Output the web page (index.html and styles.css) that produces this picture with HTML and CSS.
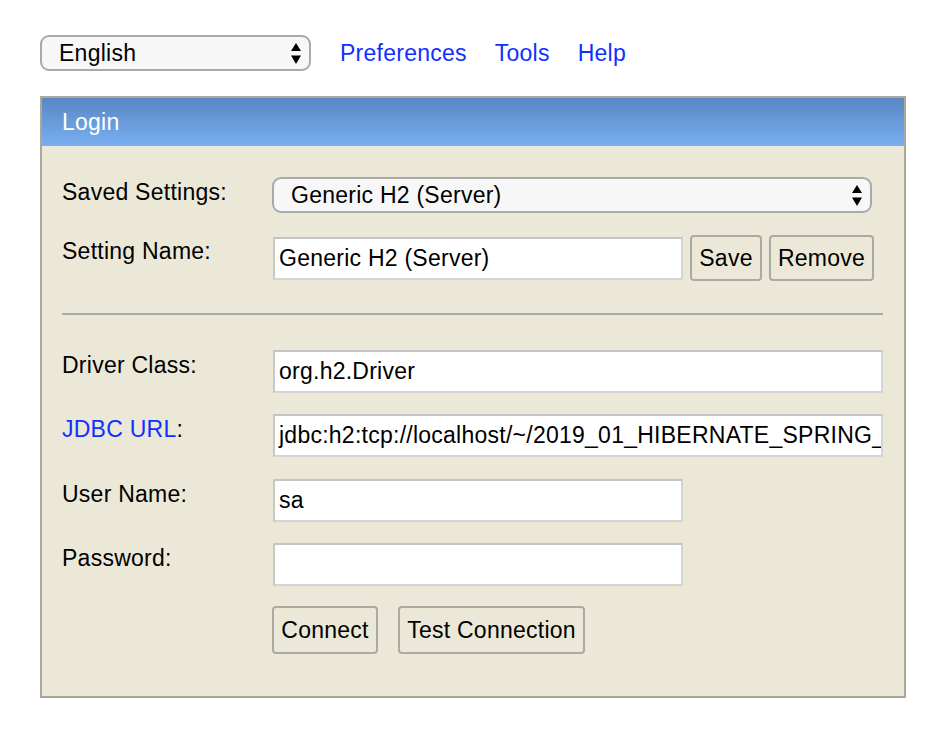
FILE: index.html
```html
<!DOCTYPE html>
<html lang="en">
<head>
<meta charset="utf-8">
<title>H2 Console</title>
<link rel="stylesheet" href="styles.css">
</head>
<body>
<div class="page">
  <div class="topbar">
    <div class="select select-lang">
      <span>English</span>
      <svg class="arrows" width="10" height="21" viewBox="0 0 10 21"><polygon points="0,8 5,0 10,8"/><polygon points="0,12.5 10,12.5 5,21"/></svg>
    </div>
    <nav class="links">
      <a href="#">Preferences</a>
      <a href="#">Tools</a>
      <a href="#">Help</a>
    </nav>
  </div>

  <div class="panel">
    <div class="panel-head">Login</div>
    <div class="panel-body">
      <div class="row row-saved">
        <div class="label">Saved Settings:</div>
        <div class="select select-saved">
          <span>Generic H2 (Server)</span>
          <svg class="arrows" width="10" height="21" viewBox="0 0 10 21"><polygon points="0,8 5,0 10,8"/><polygon points="0,12.5 10,12.5 5,21"/></svg>
        </div>
      </div>
      <div class="row row-name">
        <div class="label">Setting Name:</div>
        <div class="controls">
          <div class="input input-short">Generic H2 (Server)</div>
          <button class="btn btn-save">Save</button>
          <button class="btn btn-remove">Remove</button>
        </div>
      </div>
      <div class="divider"></div>
      <div class="row row-driver">
        <div class="label">Driver Class:</div>
        <div class="input input-long">org.h2.Driver</div>
      </div>
      <div class="row row-gap">
        <div class="label"><a href="#">JDBC URL</a>:</div>
        <div class="input input-long">jdbc:h2:tcp://localhost/~/2019_01_HIBERNATE_SPRING_BOOT</div>
      </div>
      <div class="row row-gap-wide">
        <div class="label">User Name:</div>
        <div class="input input-short">sa</div>
      </div>
      <div class="row row-gap">
        <div class="label">Password:</div>
        <div class="input input-short"></div>
      </div>
      <div class="row row-actions">
        <div class="label"></div>
        <div class="controls controls-actions">
          <button class="btn btn-big btn-connect">Connect</button>
          <button class="btn btn-big btn-test">Test Connection</button>
        </div>
      </div>
    </div>
  </div>
</div>
</body>
</html>
```

FILE: styles.css
```css
html, body {
  margin: 0;
  padding: 0;
  background: #ffffff;
}

body {
  font-family: "Liberation Sans", Arial, Helvetica, sans-serif;
  font-size: 23px;
  letter-spacing: 0.25px;
  color: #000000;
}

.page {
  padding: 35px 0 0 40px;
  width: 866px;
}

a {
  color: #1030ff;
  text-decoration: none;
}

.topbar {
  display: flex;
  align-items: center;
  height: 36px;
}

.links {
  display: flex;
  gap: 28px;
  margin-left: 29px;
  line-height: 26px;
}

.select {
  box-sizing: border-box;
  display: flex;
  align-items: center;
  justify-content: space-between;
  height: 36px;
  background: #f7f7f7;
  border: 2px solid #a9a9a9;
  border-radius: 9px;
  padding: 0 8px 0 17px;
  line-height: 26px;
}

.select-lang {
  width: 271px;
}

.select-saved {
  width: 600px;
  margin-left: -1px;
}

.arrows {
  display: block;
  fill: #000000;
  flex: none;
}

.panel {
  box-sizing: border-box;
  margin-top: 25px;
  width: 866px;
  background: #ece8d8;
  border: 2px solid #aca899;
}

.panel-head {
  height: 48px;
  display: flex;
  align-items: center;
  padding-left: 20px;
  color: #ffffff;
  background: linear-gradient(to bottom, #5a86c4 0%, #78aff1 100%);
}

.panel-body {
  padding: 31px 20px 42px 20px;
}

.row {
  display: grid;
  grid-template-columns: 211px 1fr;
  align-items: start;
}

.label {
  padding-top: 2px;
  line-height: 26px;
}

.row-name {
  margin-top: 22px;
}

.row-name .label {
  padding-top: 3px;
}

.controls {
  display: flex;
  align-items: center;
  gap: 7px;
}

.input {
  box-sizing: border-box;
  height: 43px;
  background: #ffffff;
  border: 2px solid #d4d4d4;
  border-top-color: #c4c4c4;
  border-left-color: #c8c8c8;
  padding: 0 4px;
  line-height: 39px;
  white-space: nowrap;
  overflow: hidden;
}

.input-short {
  width: 410px;
}

.input-long {
  width: 610px;
}

.row-name .input {
  margin-top: 1px;
}

.divider {
  margin: 32px 0 35px 0;
  height: 0;
  border-top: 2px solid #a8a8a8;
  width: 821px;
}

.row-gap {
  margin-top: 21px;
}

.row-gap-wide {
  margin-top: 22px;
}

.row-actions {
  margin-top: 20px;
}

.btn {
  box-sizing: border-box;
  font-family: "Liberation Sans", Arial, Helvetica, sans-serif;
  font-size: 23px;
  letter-spacing: 0.25px;
  color: #000000;
  background: #ece8d8;
  border: 2px solid #aba9a2;
  border-radius: 4px;
  height: 46px;
  padding: 0;
  margin: 0;
  line-height: 26px;
}

.btn-save {
  width: 72px;
}

.btn-remove {
  width: 105px;
}

.controls-actions {
  gap: 20px;
  margin-left: -1px;
}

.btn-big {
  height: 48px;
}

.btn-connect {
  width: 106px;
}

.btn-test {
  width: 187px;
}
```
